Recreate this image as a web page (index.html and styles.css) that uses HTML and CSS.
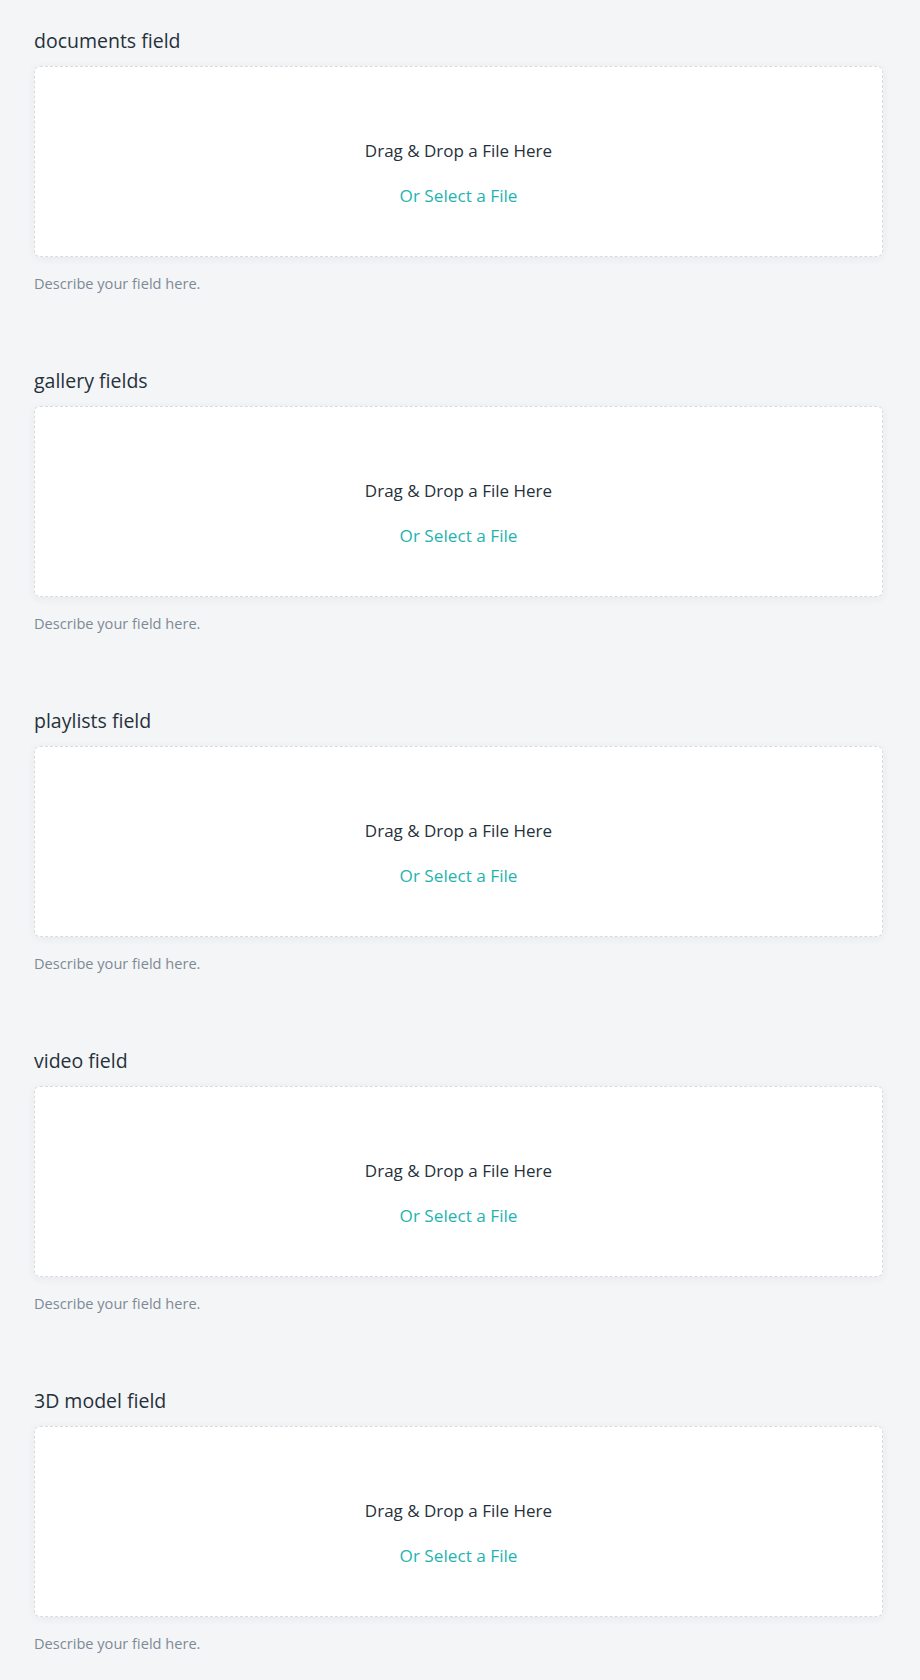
FILE: index.html
```html
<!DOCTYPE html>
<html>
<head>
<meta charset="utf-8">
<link rel="stylesheet" href="styles.css">
</head>
<body>
<main class="page">
  <section class="field">
    <h2 class="field-title">documents field</h2>
    <div class="dropzone">
      <p class="drop-text">Drag &amp; Drop a File Here</p>
      <p class="select-text">Or Select a File</p>
    </div>
    <p class="field-desc">Describe your field here.</p>
  </section>
  <section class="field">
    <h2 class="field-title">gallery fields</h2>
    <div class="dropzone">
      <p class="drop-text">Drag &amp; Drop a File Here</p>
      <p class="select-text">Or Select a File</p>
    </div>
    <p class="field-desc">Describe your field here.</p>
  </section>
  <section class="field">
    <h2 class="field-title">playlists field</h2>
    <div class="dropzone">
      <p class="drop-text">Drag &amp; Drop a File Here</p>
      <p class="select-text">Or Select a File</p>
    </div>
    <p class="field-desc">Describe your field here.</p>
  </section>
  <section class="field">
    <h2 class="field-title">video field</h2>
    <div class="dropzone">
      <p class="drop-text">Drag &amp; Drop a File Here</p>
      <p class="select-text">Or Select a File</p>
    </div>
    <p class="field-desc">Describe your field here.</p>
  </section>
  <section class="field">
    <h2 class="field-title">3D model field</h2>
    <div class="dropzone">
      <p class="drop-text">Drag &amp; Drop a File Here</p>
      <p class="select-text">Or Select a File</p>
    </div>
    <p class="field-desc">Describe your field here.</p>
  </section>
</main>
</body>
</html>
```
FILE: styles.css
```css
html, body {
  margin: 0;
  padding: 0;
  background: #f4f5f7;
}
body {
  font-family: "Open Sans", "Noto Sans", sans-serif;
  color: #2b3640;
}
.page {
  padding: 29px 37px 0 34px;
  display: flex;
  flex-direction: column;
  gap: 76px;
}
.field {
  display: flex;
  flex-direction: column;
}
.field-title {
  margin: 0 0 13px;
  font-size: 19.5px;
  font-weight: 400;
  line-height: 24px;
  color: #25313b;
}
.dropzone {
  box-sizing: border-box;
  height: 191px;
  background: #fff;
  border: 1px dashed #d9dcdf;
  border-radius: 6px;
  box-shadow: 0 2px 8px rgba(40, 50, 60, 0.06);
  display: flex;
  flex-direction: column;
  align-items: center;
  padding-top: 73px;
}
.drop-text {
  margin: 0;
  font-size: 17px;
  line-height: 22px;
  color: #25313b;
}
.select-text {
  margin: 23px 0 0;
  font-size: 17.2px;
  line-height: 22px;
  color: #1fb3b0;
  cursor: pointer;
}
.field-desc {
  margin: 16px 0 0;
  font-size: 14.6px;
  line-height: 20px;
  color: #7d8a95;
}
```
